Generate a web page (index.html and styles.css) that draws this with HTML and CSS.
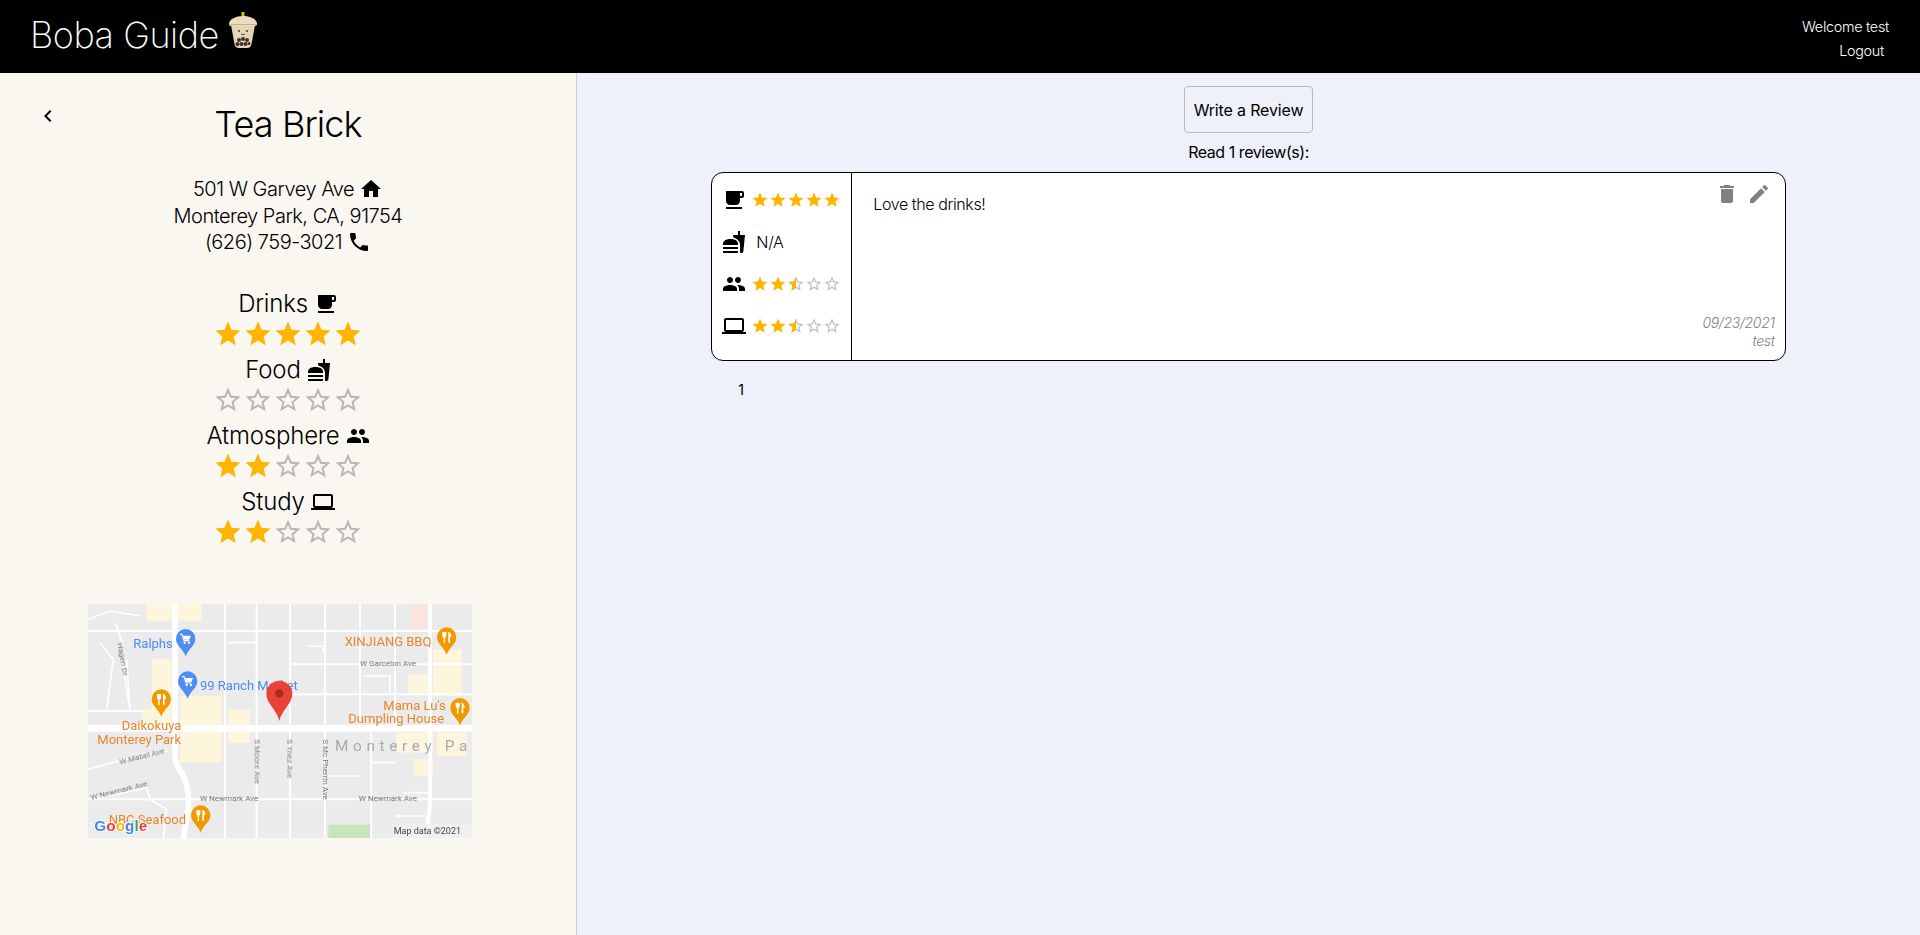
FILE: index.html
```html
<!DOCTYPE html>
<html lang="en">
<head>
<meta charset="utf-8">
<title>Boba Guide</title>
<link rel="stylesheet" href="styles.css">
</head>
<body>
<svg class="defs" aria-hidden="true">
  <defs>
    <symbol id="i-home" viewBox="0 0 24 24"><path d="M10 20v-6h4v6h5v-8h3L12 3 2 12h3v8z"/></symbol>
    <symbol id="i-phone" viewBox="0 0 24 24"><path d="M6.62 10.79c1.44 2.83 3.76 5.14 6.59 6.59l2.2-2.2c.27-.27.67-.36 1.02-.24 1.12.37 2.33.57 3.57.57.55 0 1 .45 1 1V20c0 .55-.45 1-1 1-9.39 0-17-7.61-17-17 0-.55.45-1 1-1h3.5c.55 0 1 .45 1 1 0 1.25.2 2.45.57 3.57.11.35.03.74-.25 1.02l-2.2 2.2z"/></symbol>
    <symbol id="i-cafe" viewBox="0 0 24 24"><path d="M20 3H4v10c0 2.21 1.79 4 4 4h6c2.21 0 4-1.79 4-4v-3h2c1.11 0 2-.89 2-2V5c0-1.11-.89-2-2-2zm0 5h-2V5h2v3zM4 19h16v2H4z"/></symbol>
    <symbol id="i-food" viewBox="0 0 24 24"><path d="M18.06 22.99h1.66c.84 0 1.53-.64 1.63-1.46L23 5.05h-5V1h-1.97v4.05h-4.97l.3 2.34c1.71.47 3.31 1.32 4.27 2.26 1.44 1.42 2.43 2.89 2.43 5.29v8.05zM1 21.99V21h15.03v.99c0 .55-.45 1-1.01 1H2.01c-.56 0-1.01-.45-1.01-1zm15.03-7c.5-4-2.72-6-7.53-6S.5 11 .97 15h15.06zM1.02 17h15v2h-15z"/></symbol>
    <symbol id="i-people" viewBox="0 0 24 24"><path d="M16 11c1.66 0 2.99-1.34 2.99-3S17.66 5 16 5c-1.66 0-3 1.34-3 3s1.34 3 3 3zm-8 0c1.66 0 2.99-1.34 2.99-3S9.66 5 8 5C6.34 5 5 6.34 5 8s1.34 3 3 3zm0 2c-2.33 0-7 1.17-7 3.5V19h14v-2.5c0-2.33-4.67-3.5-7-3.5zm8 0c-.29 0-.62.02-.97.05 1.16.84 1.97 1.97 1.97 3.45V19h6v-2.5c0-2.33-4.67-3.5-7-3.5z"/></symbol>
    <symbol id="i-laptop" viewBox="0 0 24 24"><path d="M20 18c1.1 0 1.99-.9 1.99-2L22 6c0-1.1-.9-2-2-2H4c-1.1 0-2 .9-2 2v10c0 1.1.9 2 2 2H0v2h24v-2h-4zM4 6h16v10H4V6z"/></symbol>
    <symbol id="i-delete" viewBox="0 0 24 24"><path d="M6 19c0 1.1.9 2 2 2h8c1.1 0 2-.9 2-2V7H6v12zM19 4h-3.5l-1-1h-5l-1 1H5v2h14V4z"/></symbol>
    <symbol id="i-edit" viewBox="0 0 24 24"><path d="M3 17.25V21h3.75L17.81 9.94l-3.75-3.75L3 17.25zM20.71 7.04c.39-.39.39-1.02 0-1.41l-2.34-2.34c-.39-.39-1.02-.39-1.41 0l-1.83 1.83 3.75 3.75 1.83-1.83z"/></symbol>
    <symbol id="i-back" viewBox="0 0 24 24"><path d="M15.41 7.41 14 6l-6 6 6 6 1.41-1.41L10.83 12z"/></symbol>
    <symbol id="s-full" viewBox="0 0 24 24"><path class="star-on" d="M12 17.27 18.18 21l-1.64-7.03L22 9.24l-7.19-.61L12 2 9.19 8.63 2 9.24l5.46 4.73L5.82 21z"/></symbol>
    <symbol id="s-empty" viewBox="0 0 24 24"><path class="star-off" d="M22 9.24l-7.19-.62L12 2 9.19 8.63 2 9.24l5.46 4.73L5.82 21 12 17.27 18.18 21l-1.63-7.03L22 9.24zM12 15.4l-3.76 2.27 1-4.28-3.32-2.88 4.38-.38L12 6.1l1.71 4.04 4.38.38-3.32 2.88 1 4.28L12 15.4z"/></symbol>
    <clipPath id="left-half"><rect x="0" y="0" width="12" height="24"/></clipPath>
    <symbol id="s-half" viewBox="0 0 24 24"><path class="star-off" d="M22 9.24l-7.19-.62L12 2 9.19 8.63 2 9.24l5.46 4.73L5.82 21 12 17.27 18.18 21l-1.63-7.03L22 9.24zM12 15.4l-3.76 2.27 1-4.28-3.32-2.88 4.38-.38L12 6.1l1.71 4.04 4.38.38-3.32 2.88 1 4.28L12 15.4z"/><path class="star-on" clip-path="url(#left-half)" d="M12 17.27 18.18 21l-1.64-7.03L22 9.24l-7.19-.61L12 2 9.19 8.63 2 9.24l5.46 4.73L5.82 21z"/></symbol>
    <symbol id="pin-blue" viewBox="-30 -30 60 90" overflow="visible"><path fill="#4f8df5" d="M0-29a29 29 0 0 1 29 29c0 22-20 28-29 53C-9 28-29 22-29 0A29 29 0 0 1 0-29z"/><path fill="none" stroke="#fff" stroke-width="3.500" d="M-17-13h6l6 19h16"/><path fill="#fff" d="M-8-9h24l-5 12H-4z"/><circle cx="-3" cy="12" r="3.500" fill="#fff"/><circle cx="10" cy="12" r="3.500" fill="#fff"/></symbol>
    <symbol id="pin-orange" viewBox="-30 -30 60 90" overflow="visible"><path fill="#f29900" d="M0-29a29 29 0 0 1 29 29c0 22-20 28-29 53C-9 28-29 22-29 0A29 29 0 0 1 0-29z"/><path fill="none" stroke="#fff" stroke-width="4" stroke-linecap="round" d="M-7-3V17"/><path fill="#fff" d="M-13-15h12V-4a6 6 0 0 1-12 0zM5-15c6 0 9 8 9 15H10V17H5z"/></symbol>
  </defs>
</svg>

<div class="app">
  <header class="topbar">
    <div class="brand">
      <span class="brand-name">Boba Guide</span>
      <svg class="boba" viewBox="0 0 30 36" role="img" aria-label="boba tea">
        <rect x="13.500" y="0" width="3" height="8" fill="#d8c01a"/>
        <path d="M3 13 6.500 32q.7 4 4.500 4h8q3.800 0 4.500-4L27 13z" fill="#e6d5b4"/>
        <path d="M1 12C1 7 8 4 15 4s14 3 14 8q0 2-3 2H4q-3 0-3-2z" fill="#e9dcbf"/>
        <path d="M2 12.500h26" stroke="#bfae8a" stroke-width="1"/>
        <circle cx="11" cy="19" r="1" fill="#4a3a2a"/>
        <circle cx="19" cy="19" r="1" fill="#4a3a2a"/>
        <path d="M13 22q2 1.500 4 0" fill="none" stroke="#4a3a2a" stroke-width=".9"/>
        <g fill="#3c3028">
          <circle cx="11" cy="28" r="2"/><circle cx="15" cy="27" r="2"/><circle cx="19" cy="28" r="2"/>
          <circle cx="9.500" cy="32" r="2"/><circle cx="13.500" cy="32" r="2"/><circle cx="17.500" cy="32" r="2"/><circle cx="21" cy="31.500" r="1.500"/>
        </g>
      </svg>
    </div>
    <nav class="account">
      <span class="welcome">Welcome test</span>
      <a class="logout">Logout</a>
    </nav>
  </header>

  <div class="columns">
    <aside class="shop">
      <div class="shop-title">
        <a class="back"><svg class="icon"><use href="#i-back"/></svg></a>
        <h1>Tea Brick</h1>
      </div>
      <address class="contact">
        <span class="line">501 W Garvey Ave <svg class="icon"><use href="#i-home"/></svg></span>
        <span class="line">Monterey Park, CA, 91754</span>
        <span class="line">(626) 759-3021 <svg class="icon"><use href="#i-phone"/></svg></span>
      </address>

      <section class="ratings">
        <div class="rating">
          <h2>Drinks <svg class="icon"><use href="#i-cafe"/></svg></h2>
          <div class="stars-lg">
            <svg><use href="#s-full"/></svg><svg><use href="#s-full"/></svg><svg><use href="#s-full"/></svg><svg><use href="#s-full"/></svg><svg><use href="#s-full"/></svg>
          </div>
        </div>
        <div class="rating">
          <h2>Food <svg class="icon"><use href="#i-food"/></svg></h2>
          <div class="stars-lg">
            <svg><use href="#s-empty"/></svg><svg><use href="#s-empty"/></svg><svg><use href="#s-empty"/></svg><svg><use href="#s-empty"/></svg><svg><use href="#s-empty"/></svg>
          </div>
        </div>
        <div class="rating">
          <h2>Atmosphere <svg class="icon"><use href="#i-people"/></svg></h2>
          <div class="stars-lg">
            <svg><use href="#s-full"/></svg><svg><use href="#s-full"/></svg><svg><use href="#s-empty"/></svg><svg><use href="#s-empty"/></svg><svg><use href="#s-empty"/></svg>
          </div>
        </div>
        <div class="rating">
          <h2>Study <svg class="icon"><use href="#i-laptop"/></svg></h2>
          <div class="stars-lg">
            <svg><use href="#s-full"/></svg><svg><use href="#s-full"/></svg><svg><use href="#s-empty"/></svg><svg><use href="#s-empty"/></svg><svg><use href="#s-empty"/></svg>
          </div>
        </div>
      </section>

      <svg class="map" viewBox="24 24 1152 702" role="img" aria-label="Map of Monterey Park">
        <rect x="24" y="24" width="1152" height="702" fill="#ebebeb"/>
        <g fill="#fdf5dc">
          <rect x="200" y="24" width="165" height="50"/><rect x="215" y="190" width="60" height="200"/>
          <rect x="300" y="300" width="125" height="200"/><rect x="445" y="340" width="65" height="100"/>
          <rect x="185" y="340" width="50" height="50"/><rect x="1060" y="160" width="85" height="140"/>
          <rect x="985" y="235" width="70" height="55"/><rect x="950" y="410" width="110" height="60"/>
          <rect x="1070" y="410" width="90" height="70"/><rect x="1000" y="490" width="60" height="50"/>
        </g>
        <rect x="995" y="24" width="45" height="75" fill="#fbe3de"/>
        <path d="M745 726V686H870V726z" fill="#c5e6bd"/>
        <g fill="none" stroke="#fff">
          <path stroke-width="20" d="M24 397H1176"/>
          <path stroke-width="17" d="M285 24V470q0 40 20 60 25 40 20 110l-15 86"/>
          <path stroke-width="12" d="M1050 24V600q0 60-15 126"/>
          <path stroke-width="6" d="M24 105H1176M630 205H1176M630 295H1176M24 345H190M24 610H1176M874 410V726M945 24V397M840 24V397M735 24V726M630 24V726M530 24V726M435 24V726"/>
          <path stroke-width="5" d="M24 520 130 490 265 465M24 70 90 45 180 60M105 80 130 150M60 140 100 190 80 340M125 190 150 340 140 190M24 610 130 590 200 575 210 610 260 640 250 726M440 140H530M680 150H730V170M850 240H930V290M745 540H840M880 500H945M970 590H1045M945 660H1040"/>
        </g>
        <g font-family="Roboto, 'Liberation Sans', sans-serif" fill="#777" font-size="24">
          <text x="840" y="211">W Garcelon Ave</text>
          <text x="360" y="616">W Newmark Ave</text>
          <text x="836" y="616">W Newmark Ave</text>
          <text transform="translate(120 505) rotate(-14)">W Mabel Ave</text>
          <text transform="translate(34 612) rotate(-14)">W Newmark Ave</text>
          <text transform="translate(112 142) rotate(80)">Hagen Dr</text>
          <text transform="translate(524 430) rotate(90)">S Moore Ave</text>
          <text transform="translate(622 430) rotate(90)">S Ynez Ave</text>
          <text transform="translate(728 430) rotate(90)">S Mc Pherrin Ave</text>
        </g>
        <text x="765" y="465" font-family="Roboto, 'Liberation Sans', sans-serif" font-size="46" fill="#a4aab2" letter-spacing="14">Monterey Pa</text>
        <g font-family="Roboto, 'Liberation Sans', sans-serif" font-size="39">
          <g fill="#4a8af4">
            <text x="160" y="155">Ralphs</text>
            <text x="360" y="282">99 Ranch Market</text>
          </g>
          <g fill="#e8862a">
            <text x="794" y="149">XINJIANG BBQ</text>
            <text x="125" y="403">Daikokuya</text>
            <text x="52" y="443">Monterey Park</text>
            <text x="910" y="342">Mama Lu's</text>
            <text x="805" y="381">Dumpling House</text>
            <text x="86" y="684">NBC Seafood</text>
          </g>
        </g>
        <use href="#pin-blue" x="287" y="98" width="60" height="90"/>
        <use href="#pin-blue" x="293" y="225" width="60" height="90"/>
        <use href="#pin-orange" x="214" y="279" width="60" height="90"/>
        <use href="#pin-orange" x="1070" y="93" width="60" height="90"/>
        <use href="#pin-orange" x="1110" y="305" width="60" height="90"/>
        <use href="#pin-orange" x="332" y="627" width="60" height="90"/>
        <path d="M598 254a39 39 0 0 1 39 39c0 30-32 48-39 82-7-34-39-52-39-82a39 39 0 0 1 39-39z" fill="#ea4335"/>
        <circle cx="598" cy="292" r="12.500" fill="#a82a1e"/>
        <rect x="935" y="685" width="241" height="41" fill="#f0f0f0"/>
        <text x="941" y="714" font-family="Roboto, 'Liberation Sans', sans-serif" font-size="27" fill="#444">Map data ©2021</text>
        <text class="glogo" x="43" y="706" font-family="'Liberation Sans', sans-serif" font-size="46" font-weight="700"><tspan fill="#4285f4">G</tspan><tspan fill="#ea4335">o</tspan><tspan fill="#fbbc05">o</tspan><tspan fill="#4285f4">g</tspan><tspan fill="#34a853">l</tspan><tspan fill="#ea4335">e</tspan></text>
      </svg>
    </aside>

    <main class="reviews">
      <button class="write" type="button">Write a Review</button>
      <p class="count">Read 1 review(s):</p>
      <article class="card">
        <div class="scores">
          <div class="score">
            <svg class="icon"><use href="#i-cafe"/></svg>
            <div class="stars-sm"><svg><use href="#s-full"/></svg><svg><use href="#s-full"/></svg><svg><use href="#s-full"/></svg><svg><use href="#s-full"/></svg><svg><use href="#s-full"/></svg></div>
          </div>
          <div class="score">
            <svg class="icon"><use href="#i-food"/></svg>
            <span class="na">N/A</span>
          </div>
          <div class="score">
            <svg class="icon"><use href="#i-people"/></svg>
            <div class="stars-sm"><svg><use href="#s-full"/></svg><svg><use href="#s-full"/></svg><svg><use href="#s-half"/></svg><svg><use href="#s-empty"/></svg><svg><use href="#s-empty"/></svg></div>
          </div>
          <div class="score">
            <svg class="icon"><use href="#i-laptop"/></svg>
            <div class="stars-sm"><svg><use href="#s-full"/></svg><svg><use href="#s-full"/></svg><svg><use href="#s-half"/></svg><svg><use href="#s-empty"/></svg><svg><use href="#s-empty"/></svg></div>
          </div>
        </div>
        <div class="body">
          <div class="body-top">
            <p class="text">Love the drinks!</p>
            <div class="actions">
              <svg class="icon"><use href="#i-delete"/></svg>
              <svg class="icon"><use href="#i-edit"/></svg>
            </div>
          </div>
          <div class="meta">
            <span>09/23/2021</span>
            <span>test</span>
          </div>
        </div>
      </article>
      <div class="pager"><span>1</span></div>
    </main>
  </div>
</div>
</body>
</html>
```
FILE: styles.css
```css
* { box-sizing: border-box; }
html, body { margin: 0; height: 100%; }
body {
  font-family: Inter, "Liberation Sans", sans-serif;
  color: #000;
  overflow: hidden;
}
.defs { width: 0; height: 0; display: block; }
.icon { width: 24px; height: 24px; fill: currentColor; flex: none; }
.star-on { fill: #ffb400; }
.star-off { fill: rgba(0, 0, 0, .26); }

.app { display: grid; grid-template-rows: 73px 1fr; height: 100vh; }

.topbar {
  background: #000;
  color: #fff;
  display: flex;
  justify-content: space-between;
  padding: 0 31px 0 30px;
}
.brand { display: flex; align-items: flex-start; gap: 9px; }
.brand-name { font-size: 36px; font-weight: 200; line-height: 71px; letter-spacing: -.45px; }
.boba { width: 30px; height: 36px; margin-top: 12px; }
.account {
  display: flex;
  flex-direction: column;
  align-items: flex-end;
  font-size: 14.400px;
  font-weight: 300;
  line-height: 24px;
  padding-top: 15px;
  letter-spacing: -.3px;
}
.logout { margin-right: 5px; }

.columns { display: grid; grid-template-columns: 577px 1fr; min-height: 0; }

.shop {
  background: #faf7f0;
  border-right: 1px solid #cfcfcf;
  padding-top: 27px;
  text-align: center;
}
.shop-title {
  display: grid;
  grid-template-columns: 1fr auto 1fr;
}
.back {
  justify-self: start;
  margin: 4px 0 0 36px;
  height: 24px;
}
.shop-title h1 {
  margin: 0;
  font-size: 36px;
  font-weight: 300;
  line-height: 48px;
  letter-spacing: -.9px;
}
.contact {
  font-style: normal;
  font-weight: 300;
  font-size: 20px;
  margin-top: 28px;
  letter-spacing: -.5px;
}
.line { display: flex; justify-content: center; align-items: center; gap: 5px; height: 26.500px; }

.ratings { margin-top: 30px; }
.rating h2 {
  margin: 0;
  display: flex;
  justify-content: center;
  align-items: center;
  gap: 6px;
  height: 36px;
  font-size: 24px;
  font-weight: 300;
  letter-spacing: -.2px;
}
.stars-lg { display: flex; justify-content: center; height: 30px; }
.stars-lg svg { width: 30px; height: 30px; margin-top: -3px; }

.map {
  display: block;
  width: 384px;
  height: 234px;
  margin: 54px 0 0 88px;
  filter: blur(.5px);
}
.glogo { stroke: #fff; stroke-width: 5px; paint-order: stroke; }

.reviews {
  background: #eef1fa;
  padding-top: 13px;
  text-align: center;
}
.write {
  width: 129px;
  height: 47px;
  background: transparent;
  border: 1px solid #b9b9bd;
  border-radius: 4px;
  color: #000;
  font: 400 16px Inter, "Liberation Sans", sans-serif;
  letter-spacing: -.15px;
  padding: 0;
}
.count {
  margin: 7px 0 8px;
  font-size: 16px;
  line-height: 24px;
  letter-spacing: -.45px;
}
.card {
  width: 80%;
  height: 189px;
  margin: 0 auto;
  background: #fff;
  border: 1px solid #000;
  border-radius: 12px;
  display: flex;
  text-align: left;
}
.scores {
  width: 140px;
  border-right: 1px solid #000;
  padding: 6px 0 0 10px;
}
.score { display: flex; align-items: center; gap: 5px; height: 42px; }
.stars-sm { display: flex; }
.stars-sm svg { width: 18px; height: 18px; }
.na { font-weight: 300; font-size: 16px; margin-left: 5px; letter-spacing: -.3px; }

.body {
  flex: 1;
  display: flex;
  flex-direction: column;
  justify-content: space-between;
  padding: 9px 10px 10px 21px;
}
.body-top { display: flex; justify-content: space-between; }
.text { margin: 10px 0 0; font-size: 16px; font-weight: 300; line-height: 24px; letter-spacing: -.4px; }
.actions { display: flex; gap: 8px; margin-right: 4px; color: #808080; }
.meta {
  display: flex;
  flex-direction: column;
  align-items: flex-end;
  color: #808080;
  font-size: 14px;
  font-style: italic;
  font-weight: 300;
  line-height: 18px;
  letter-spacing: -.3px;
}
.pager {
  margin: 17px 10% 0;
  padding-left: 27px;
  font-size: 14px;
  line-height: 24px;
  text-align: left;
}
```
